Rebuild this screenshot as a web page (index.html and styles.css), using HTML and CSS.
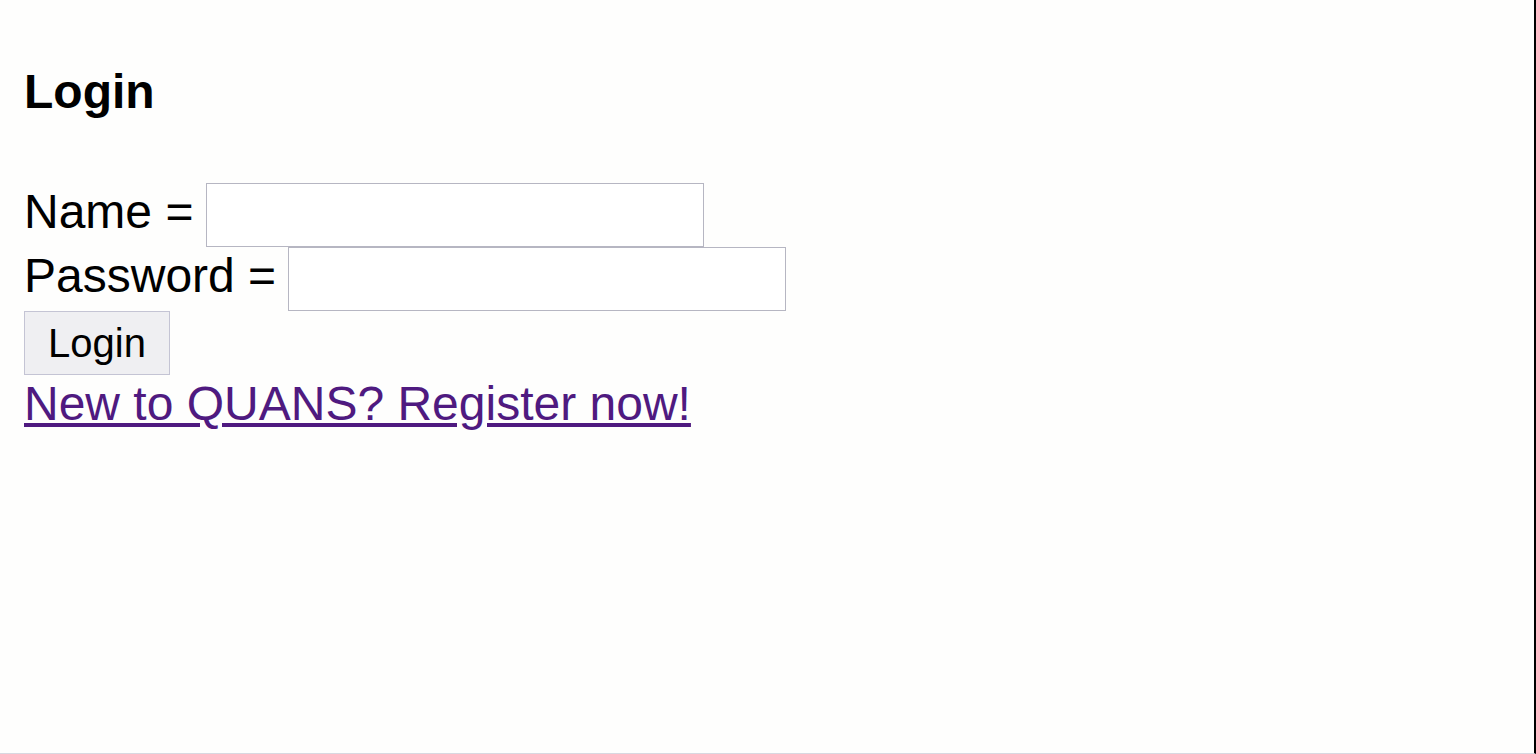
FILE: index.html
```html
<!DOCTYPE html>
<html lang="en">
<head>
<meta charset="utf-8">
<title>Login</title>
<link rel="stylesheet" href="styles.css">
</head>
<body>
<div class="frame">
  <h1 class="title">Login</h1>
  <form class="login-form">
    <div class="row"><span class="label">Name =&nbsp;</span><input class="field" type="text" name="name"></div>
    <div class="row"><span class="label">Password =&nbsp;</span><input class="field" type="password" name="password"></div>
    <div class="row"><button class="btn" type="button">Login</button></div>
  </form>
  <a class="register" href="#">New to QUANS? Register now!</a>
</div>
</body>
</html>
```
FILE: styles.css
```css
html, body {
  margin: 0;
  padding: 0;
  background: #fefefd;
}
.frame {
  box-sizing: border-box;
  height: 754px;
  padding: 64px 24px 0 24px;
  border-right: 2px solid #000;
  border-bottom: 1px solid #d8d8e0;
  font-family: "Liberation Sans", Arial, sans-serif;
  font-size: 48px;
  color: #000;
}
.title {
  margin: 0;
  font-size: 48px;
  line-height: 55px;
  font-weight: bold;
}
.login-form {
  margin: 64px 0 0 0;
  display: flex;
  flex-direction: column;
}
.row {
  display: flex;
  align-items: flex-start;
  height: 64px;
}
.label {
  line-height: 55px;
  padding-top: 1px;
  margin-right: -1px;
  white-space: pre;
}
.field {
  box-sizing: border-box;
  width: 498px;
  height: 64px;
  margin: 0;
  padding: 0 6px;
  border: 1px solid #b6b6c2;
  background: #fff;
  font-family: "Liberation Sans", Arial, sans-serif;
  font-size: 40px;
}
.btn {
  box-sizing: border-box;
  height: 64px;
  margin: 0;
  padding: 0 23px;
  border: 1px solid #c4c4d4;
  border-radius: 0;
  background: #efeff2;
  color: #000;
  font-family: "Liberation Sans", Arial, sans-serif;
  font-size: 40px;
  line-height: 46px;
}
.register {
  display: inline-block;
  line-height: 55px;
  padding-top: 1px;
  color: #4f1a80;
  text-decoration: underline;
}
```
